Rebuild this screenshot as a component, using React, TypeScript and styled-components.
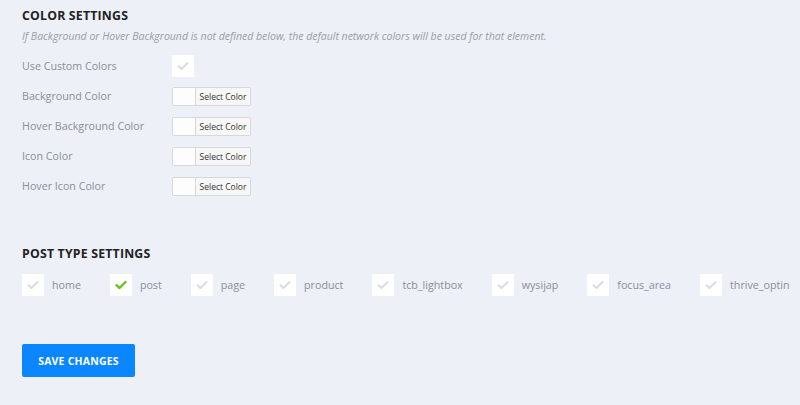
import React from "react";
import styled, { createGlobalStyle } from "styled-components";

const Global = createGlobalStyle`
  html, body { margin: 0; padding: 0; background: #edf0f7; }
  body { font-family: "Open Sans", "Noto Sans", sans-serif; }
`;

const Page = styled.div`
  padding: 6px 22px 0 22px;
  width: 800px;
  height: 405px;
  box-sizing: border-box;
  background: #edf0f7;
`;

const Heading = styled.h2`
  margin: 0;
  font-size: 12.3px;
  font-weight: 700;
  color: #222;
  letter-spacing: 0.2px;
  line-height: 20px;
`;

const Note = styled.p`
  margin: 2px 0 0 0;
  font-size: 10.5px;
  font-style: italic;
  color: #9a9ea6;
  line-height: 16px;
`;

const Rows = styled.div`
  margin-top: 7px;
  display: flex;
  flex-direction: column;
`;

const Row = styled.div`
  display: grid;
  grid-template-columns: 150px auto;
  align-items: center;
  height: 30px;
`;

const Label = styled.span`
  font-size: 10.7px;
  color: #8a8f98;
`;

const Box = styled.span`
  width: 22px;
  height: 22px;
  background: #fff;
  display: inline-flex;
  align-items: center;
  justify-content: center;
  flex-shrink: 0;
`;

const Picker = styled.div`
  display: flex;
  height: 19px;
  border: 1px solid #d6d8dc;
  border-radius: 2px;
  background: #fff;
  width: 79px;
  box-sizing: border-box;
  overflow: hidden;
`;

const Swatch = styled.span`
  width: 22px;
  border-right: 1px solid #d6d8dc;
  background: #fdfdfd;
`;

const PickButton = styled.span`
  flex: 1;
  display: flex;
  align-items: center;
  justify-content: center;
  font-size: 8.5px;
  color: #333;
  background: #f7f7f7;
`;

const Section2 = styled.div`
  margin-top: 43px;
`;

const TypeList = styled.div`
  margin-top: 10px;
  display: flex;
  gap: 29px;
`;

const TypeItem = styled.label`
  display: flex;
  align-items: center;
  gap: 8px;
  font-size: 10.7px;
  color: #8a8f98;
`;

const SaveButton = styled.button`
  margin-top: 48px;
  width: 113px;
  height: 33px;
  border: none;
  border-radius: 2px;
  background: #0a86ff;
  color: #fff;
  font-family: "Open Sans", sans-serif;
  font-weight: 700;
  font-size: 10.5px;
  letter-spacing: 0.2px;
  padding: 0;
`;

const Check = ({ on }: { on?: boolean }) => (
  <svg width="12" height="10" viewBox="0 0 12 10">
    <path
      d="M1.5 5.2 L4.5 8 L10.5 2"
      fill="none"
      stroke={on ? "#6bc41c" : "#d9dbe0"}
      strokeWidth={on ? 2.4 : 2}
      strokeLinecap="round"
      strokeLinejoin="round"
    />
  </svg>
);

const colorRows = ["Background Color", "Hover Background Color", "Icon Color", "Hover Icon Color"];
const types = ["home", "post", "page", "product", "tcb_lightbox", "wysijap", "focus_area", "thrive_optin"];

export default function App() {
  return (
    <>
      <Global />
      <Page>
        <Heading>COLOR SETTINGS</Heading>
        <Note>If Background or Hover Background is not defined below, the default network colors will be used for that element.</Note>
        <Rows>
          <Row>
            <Label>Use Custom Colors</Label>
            <Box>
              <Check />
            </Box>
          </Row>
          {colorRows.map((r) => (
            <Row key={r}>
              <Label>{r}</Label>
              <Picker>
                <Swatch />
                <PickButton>Select Color</PickButton>
              </Picker>
            </Row>
          ))}
        </Rows>
        <Section2>
          <Heading>POST TYPE SETTINGS</Heading>
          <TypeList>
            {types.map((t) => (
              <TypeItem key={t}>
                <Box>
                  <Check on={t === "post"} />
                </Box>
                {t}
              </TypeItem>
            ))}
          </TypeList>
        </Section2>
        <SaveButton>SAVE CHANGES</SaveButton>
      </Page>
    </>
  );
}
